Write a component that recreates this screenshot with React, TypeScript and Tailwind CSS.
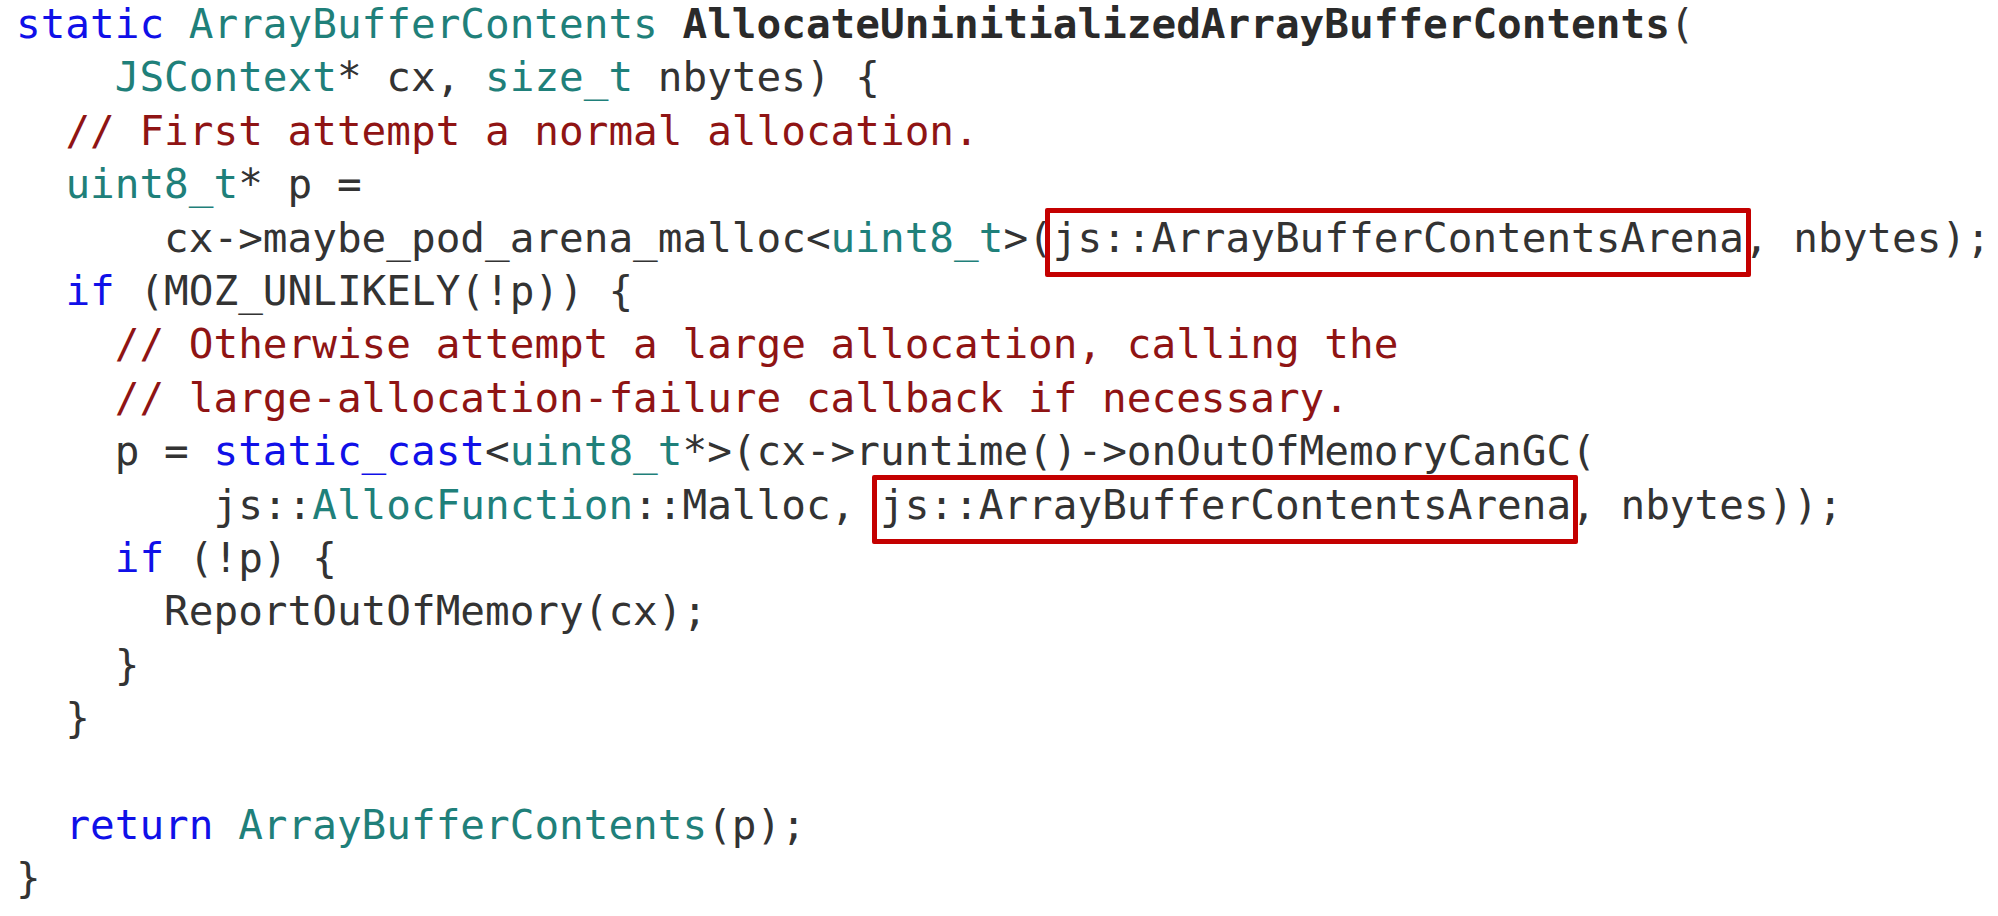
type Tok = [string, string?];

const K = "text-[#1010e8]";
const T = "text-[#1f807a]";
const C = "text-[#8f1414]";
const B = "font-bold text-[#2a2a2a]";

function Boxed({ children }: { children: string }) {
  return (
    <span className="relative">
      {children}
      <span className="absolute -left-[8px] -right-[7px] -top-[6px] -bottom-[15px] border-[5px] border-[#c40000] rounded-[2px]" />
    </span>
  );
}

const lines: (Tok | "BOX")[][] = [
  [["static", K], [" "], ["ArrayBufferContents", T], [" "], ["AllocateUninitializedArrayBufferContents", B], ["("]],
  [["    "], ["JSContext", T], ["* cx, "], ["size_t", T], [" nbytes) {"]],
  [["  "], ["// First attempt a normal allocation.", C]],
  [["  "], ["uint8_t", T], ["* p ="]],
  [["      cx->maybe_pod_arena_malloc<"], ["uint8_t", T], [">("], "BOX", [", nbytes);"]],
  [["  "], ["if", K], [" (MOZ_UNLIKELY(!p)) {"]],
  [["    "], ["// Otherwise attempt a large allocation, calling the", C]],
  [["    "], ["// large-allocation-failure callback if necessary.", C]],
  [["    p = "], ["static_cast", K], ["<"], ["uint8_t", T], ["*>(cx->runtime()->onOutOfMemoryCanGC("]],
  [["        js::"], ["AllocFunction", T], ["::Malloc, "], "BOX", [", nbytes));"]],
  [["    "], ["if", K], [" (!p) {"]],
  [["      ReportOutOfMemory(cx);"]],
  [["    }"]],
  [["  }"]],
  [[""]],
  [["  "], ["return", K], [" "], ["ArrayBufferContents", T], ["(p);"]],
  [["}"]],
];

export default function App() {
  return (
    <div className="w-[1998px] h-[916px] bg-white overflow-hidden">
      <pre className="-mt-[2px] pl-[16px] text-[41px] leading-[53.4px] text-[#333333] font-['DejaVu_Sans_Mono',monospace]">
        {lines.map((line, i) => (
          <div key={i} className="h-[53.4px]">
            {line.map((tok, j) =>
              tok === "BOX" ? (
                <Boxed key={j}>js::ArrayBufferContentsArena</Boxed>
              ) : (
                <span key={j} className={tok[1]}>
                  {tok[0]}
                </span>
              )
            )}
          </div>
        ))}
      </pre>
    </div>
  );
}
